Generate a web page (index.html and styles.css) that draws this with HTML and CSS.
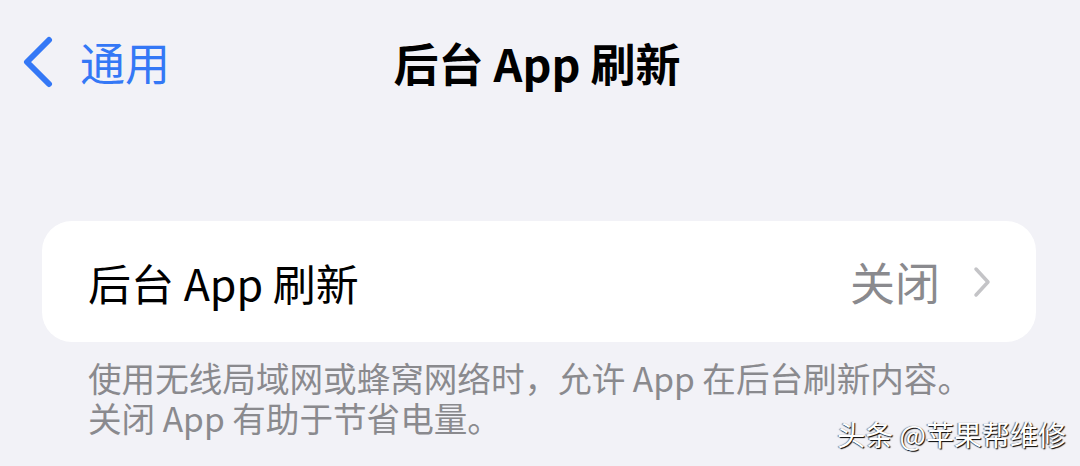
FILE: index.html
```html
<!DOCTYPE html>
<html>
<head>
  <meta charset="UTF-8">
  <title>后台 App 刷新</title>
  <link rel="stylesheet" href="styles.css">
</head>
<body>
  <div class="page">
    <div class="navbar">
      <div class="back">
        <svg class="back-icon" viewBox="0 0 32 52" fill="none" xmlns="http://www.w3.org/2000/svg">
          <path d="M27 4L5 26L27 48" stroke="currentColor" stroke-width="6" stroke-linecap="round" stroke-linejoin="round"/>
        </svg>
        <span class="back-label">通用</span>
      </div>
      <h1 class="nav-title">后台 App 刷新</h1>
    </div>

    <div class="group">
      <div class="cell">
        <span class="cell-label">后台 App 刷新</span>
        <span class="cell-value">关闭</span>
        <svg class="chevron" viewBox="0 0 20 32" fill="none" xmlns="http://www.w3.org/2000/svg">
          <path d="M4 3L16 16L4 29" stroke="currentColor" stroke-width="3.5" stroke-linecap="round" stroke-linejoin="round"/>
        </svg>
      </div>
    </div>

    <div class="footer">
      <div class="footer-line">使用无线局域网或蜂窝网络时，允许 App 在后台刷新内容。</div>
      <div class="footer-line">关闭 App 有助于节省电量。</div>
    </div>

    <div class="watermark">头条 @苹果帮维修</div>
  </div>
</body>
</html>
```

FILE: styles.css
```css
body {
  margin: 0;
  background-color: #f2f2f7;
  font-family: "Noto Sans CJK SC", "Noto Sans", sans-serif;
  width: 1080px;
  height: 466px;
  overflow: hidden;
}
.page {
  position: relative;
  height: 466px;
}
.navbar {
  position: relative;
  height: 126px;
  display: flex;
  align-items: center;
  justify-content: center;
}
.back {
  position: absolute;
  left: 22px;
  top: 36px;
  display: flex;
  align-items: center;
  gap: 26px;
  color: #3478f6;
}
.back-icon {
  width: 32px;
  height: 52px;
}
.back-label {
  font-size: 45px;
  line-height: 52px;
}
.nav-title {
  margin: 0;
  font-size: 45px;
  font-weight: 700;
  color: #000;
  line-height: 52px;
  padding-right: 6px;
}
.group {
  margin: 95px 44px 0 42px;
  background-color: #fff;
  border-radius: 30px;
}
.cell {
  height: 121px;
  display: flex;
  align-items: center;
  padding: 0 44px 0 46px;
}
.cell-label {
  flex: 1;
  font-size: 43px;
  color: #000;
}
.cell-value {
  font-size: 45px;
  color: #8a8a8e;
  margin-right: 32px;
}
.chevron {
  width: 20px;
  height: 32px;
  color: #c4c4c7;
}
.footer {
  margin: 16px 0 0 88px;
  font-size: 33.6px;
  color: #8a8a8e;
}
.footer-line {
  line-height: 40px;
}
.watermark {
  position: absolute;
  right: 14px;
  bottom: 12px;
  font-size: 28px;
  color: #fff;
  text-shadow: 1px 1px 1px #000, -1px 0 1px rgba(0, 0, 0, 0.5);
}
```
